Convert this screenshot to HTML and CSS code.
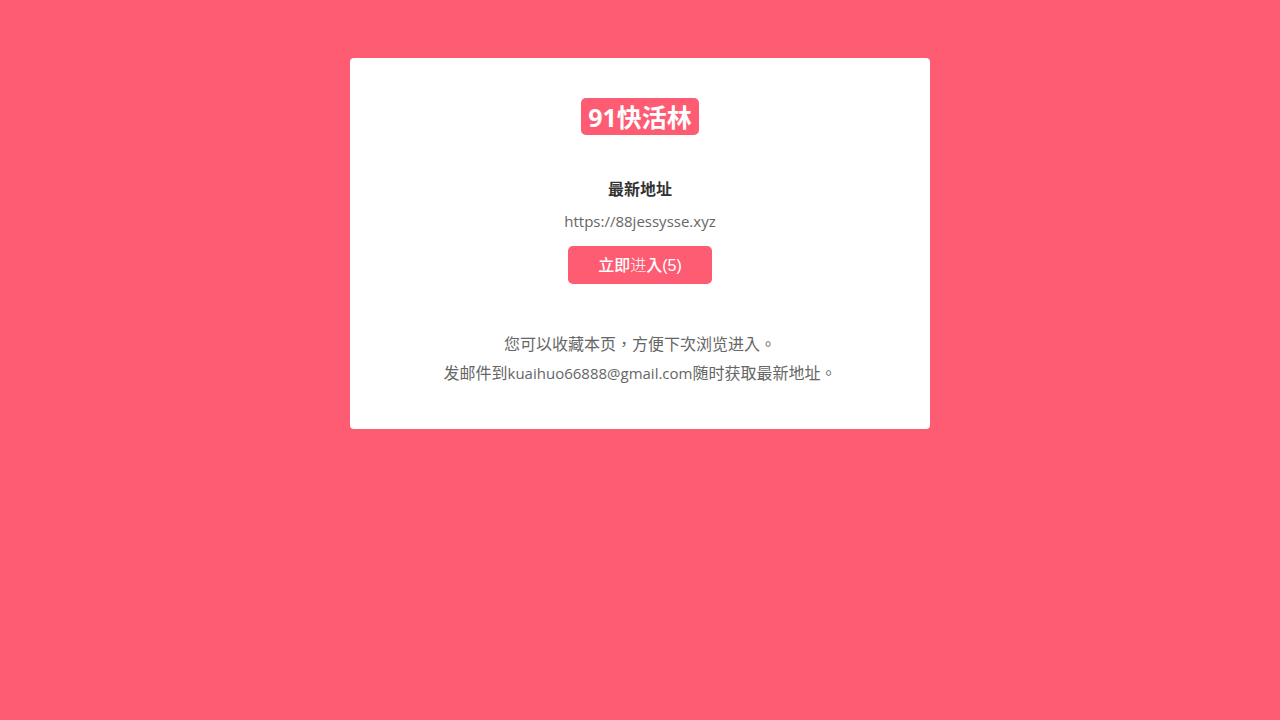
FILE: index.html
```html
<!DOCTYPE html>
<html lang="zh-TW">
<head>
  <meta charset="UTF-8">
  <meta name="viewport" content="width=device-width, initial-scale=1.0">
  <title>91快活林</title>
  <link rel="stylesheet" href="styles.css">
</head>
<body>
  <main class="panel">
    <h1 class="logo">91快活林</h1>

    <section class="address">
      <h2>最新地址</h2>
      <p class="latin">https://88jessysse.xyz</p>
      <button type="button" class="btn">立即<span class="thin">进</span>入(5)</button>
    </section>

    <footer class="tips">
      <p>您可以收藏本页，方便下次浏览进入。</p>
      <p>发邮件到<span class="latin">kuaihuo66888@gmail.com</span>随时获取最新地址。</p>
    </footer>
  </main>
</body>
</html>
```

FILE: styles.css
```css
* {
  box-sizing: border-box;
}

body {
  margin: 0;
  padding: 58px 16px;
  background-color: #fd5c73;
  color: #666;
  font-family: "Open Sans", "Noto Sans CJK TC", sans-serif;
  font-size: 16px;
  line-height: 29px;
  text-align: center;
}

h1, h2, p {
  margin: 0;
}

.panel {
  max-width: 580px;
  margin: 0 auto;
  padding: 40px 20px;
  background-color: #fff;
  border-radius: 4px;
}

.logo {
  display: inline-block;
  padding: 1px 7px 0;
  background-color: #fd5c73;
  border-radius: 5px;
  color: #fff;
  font-size: 25px;
  line-height: 36px;
  vertical-align: top;
}

.address {
  margin-top: 38px;
}

.address h2 {
  color: #333;
  font-size: 16px;
  line-height: 32px;
}

.address p {
  line-height: 32px;
}

.latin {
  font-size: 15px;
}

.btn {
  display: inline-block;
  margin-top: 9px;
  padding: 1px 30px 0;
  background-color: #fd5c73;
  border: none;
  border-radius: 5px;
  color: #fff;
  cursor: pointer;
  font-family: "Liberation Sans", "Noto Sans CJK TC", sans-serif;
  font-size: 16px;
  font-weight: 500;
  line-height: 37px;
  vertical-align: top;
}

.thin {
  font-weight: 300;
}

.tips {
  margin-top: 46px;
  padding-bottom: 1px;
}
```
